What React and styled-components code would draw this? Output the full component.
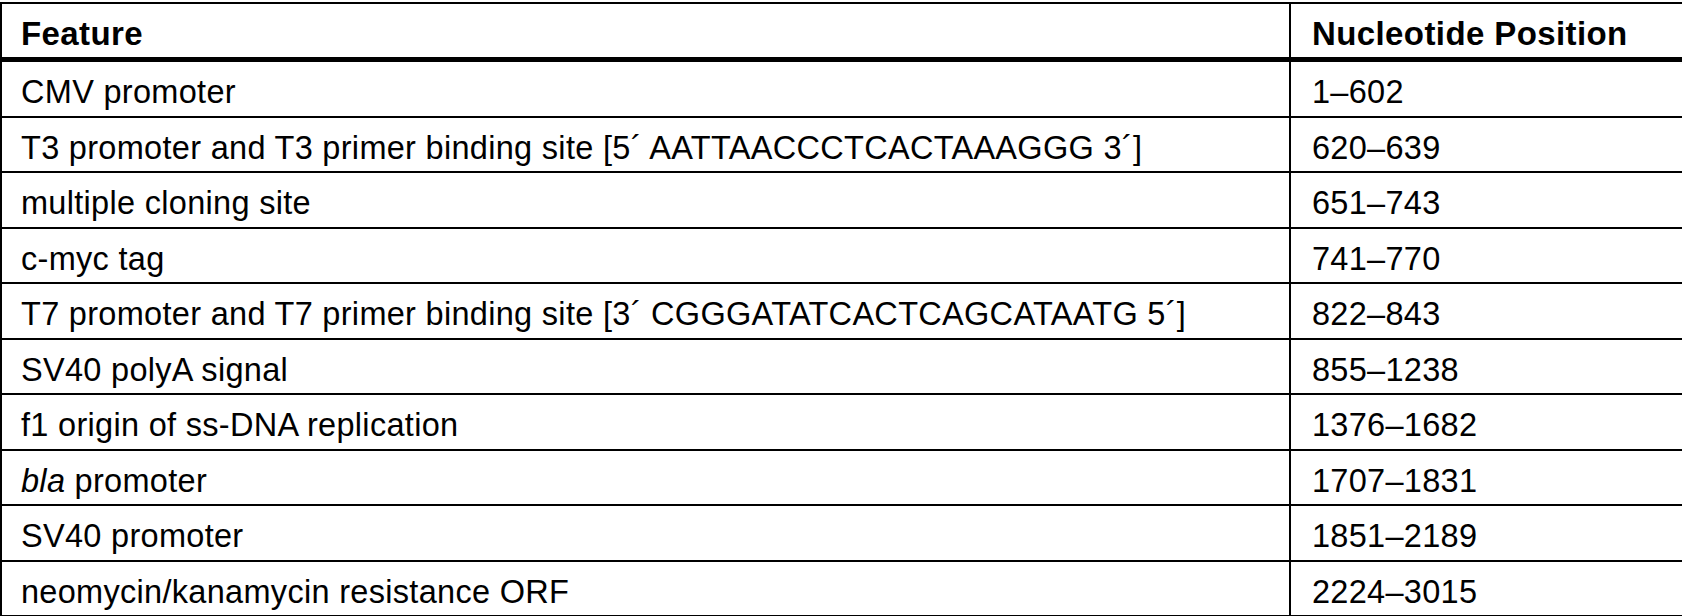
import React from 'react'
import styled, { createGlobalStyle } from 'styled-components'

const GlobalStyle = createGlobalStyle`
  html, body {
    margin: 0;
    padding: 0;
    background: #fff;
    overflow: hidden;
  }
  body {
    font-family: "Liberation Sans", Arial, sans-serif;
    color: #000;
  }
`

const features = [
  { name: 'CMV promoter', pos: '1–602' },
  { name: 'T3 promoter and T3 primer binding site [5´ AATTAACCCTCACTAAAGGG 3´]', pos: '620–639' },
  { name: 'multiple cloning site', pos: '651–743' },
  { name: 'c-myc tag', pos: '741–770' },
  { name: 'T7 promoter and T7 primer binding site [3´ CGGGATATCACTCAGCATAATG 5´]', pos: '822–843' },
  { name: 'SV40 polyA signal', pos: '855–1238' },
  { name: 'f1 origin of ss-DNA replication', pos: '1376–1682' },
  { name: <><em>bla</em> promoter</>, pos: '1707–1831' },
  { name: 'SV40 promoter', pos: '1851–2189' },
  { name: 'neomycin/kanamycin resistance ORF', pos: '2224–3015' },
]

export default function App() {
  return (
    <>
      <GlobalStyle />
      <Table>
        <HeadCell $first>Feature</HeadCell>
        <HeadCell>Nucleotide Position</HeadCell>
        {features.map((f, i) => (
          <React.Fragment key={i}>
            <Cell $first>{f.name}</Cell>
            <Cell>{f.pos}</Cell>
          </React.Fragment>
        ))}
      </Table>
    </>
  )
}

const Table = styled.div`
  display: grid;
  grid-template-columns: 1289px 1fr;
  grid-template-rows: 58px;
  grid-auto-rows: 55.5px;
  margin-top: 2px;
  width: 1720px;
  border-top: 2px solid #000;
  border-left: 2px solid #000;
  box-sizing: border-box;
`

const HeadCell = styled.div`
  box-sizing: border-box;
  padding: 11px 0 0 ${p => (p.$first ? '19px' : '21px')};
  font-size: 33px;
  font-weight: bold;
  line-height: 37px;
  letter-spacing: 0.4px;
  white-space: nowrap;
  border-bottom: 5px solid #000;
  border-right: ${p => (p.$first ? '2px solid #000' : 'none')};
`

const Cell = styled.div`
  box-sizing: border-box;
  padding: 12px 0 0 ${p => (p.$first ? '19px' : '21px')};
  font-size: 32.5px;
  line-height: 37px;
  letter-spacing: 0.3px;
  white-space: nowrap;
  border-bottom: 2px solid #000;
  border-right: ${p => (p.$first ? '2px solid #000' : 'none')};

  em {
    font-style: italic;
  }
`
